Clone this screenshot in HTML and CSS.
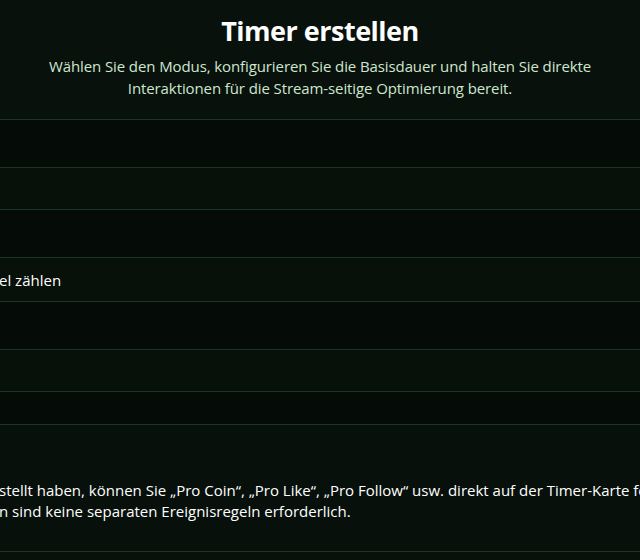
FILE: index.html
```html
<!DOCTYPE html>
<html lang="de">
<head>
    <meta charset="UTF-8">
    <meta name="viewport" content="width=device-width, initial-scale=1.0">
    <title>Timer erstellen</title>
    <link rel="stylesheet" href="styles.css">
</head>
<body>
    <!-- Kopfbereich -->
    <header class="kopf">
        <h1>Timer erstellen</h1>
        <p class="untertitel">Wählen Sie den Modus, konfigurieren Sie die Basisdauer und halten Sie direkte Interaktionen für die Stream-seitige Optimierung bereit.</p>
    </header>

    <!-- Formularzeilen -->
    <div class="zeilen">
        <div class="zeile hoch dunkel"></div>
        <div class="zeile"></div>
        <div class="zeile hoch dunkel"></div>
        <div class="zeile mittel text"><span class="abgeschnitten">el zählen</span></div>
        <div class="zeile hoch dunkel"></div>
        <div class="zeile"></div>
        <div class="zeile klein dunkel"></div>
        <div class="zeile hinweis">
            <p class="abgeschnitten">stellt haben, können Sie „Pro Coin“, „Pro Like“, „Pro Follow“ usw. direkt auf der Timer-Karte festlegen.<br>n sind keine separaten Ereignisregeln erforderlich.</p>
        </div>
        <div class="zeile"></div>
    </div>
</body>
</html>
```

FILE: styles.css
```css
body {
    font-family: 'Open Sans', 'Noto Sans', sans-serif;
    background-color: #07100a;
    color: #fff;
    margin: 0;
    padding: 0;
    overflow: hidden;
}
.kopf {
    height: 119px;
    padding-top: 12px;
    box-sizing: border-box;
    text-align: center;
    background-color: #08110b;
}
.kopf h1 {
    font-size: 27px;
    font-weight: 700;
    margin: 0;
    line-height: 38px;
    letter-spacing: -0.5px;
}
.untertitel {
    font-size: 15px;
    line-height: 22px;
    color: #cfe6cf;
    margin: 5px auto 0;
    max-width: 580px;
    letter-spacing: -0.1px;
}
.zeile {
    border-top: 1px solid #1c3426;
    height: 41px;
    background-color: #08100a;
}
.zeile.hoch {
    height: 47px;
}
.zeile.mittel {
    height: 43px;
}
.zeile.klein {
    height: 32px;
}
.dunkel {
    background-color: #050b07;
}
.text {
    display: flex;
    align-items: center;
    font-size: 15px;
}
.abgeschnitten {
    margin: 0 0 0 -1px;
    white-space: nowrap;
}
.zeile.hinweis {
    height: 127px;
    padding-top: 55px;
    box-sizing: border-box;
    background-color: #07100a;
}
.hinweis p {
    font-size: 15px;
    line-height: 21px;
}
```
